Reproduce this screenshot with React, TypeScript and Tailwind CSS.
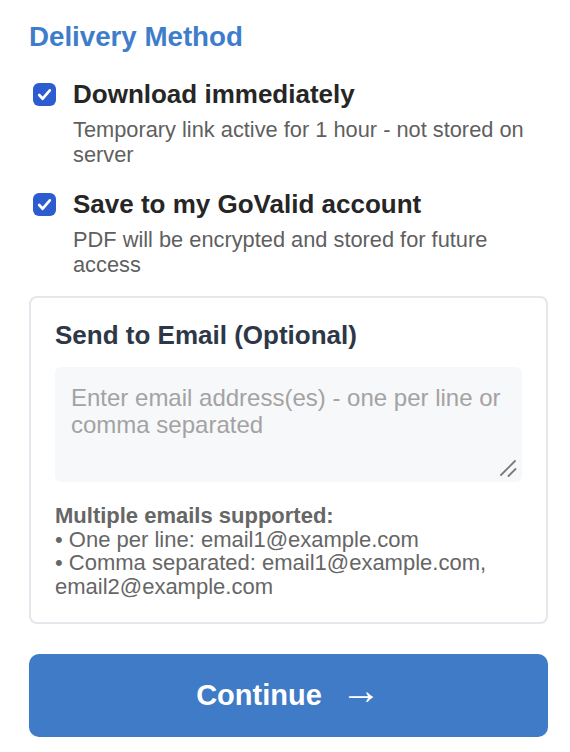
import { useState } from 'react';

interface OptionProps {
  title: string;
  description: string;
  checked: boolean;
  onToggle: () => void;
}

function CheckIcon(): JSX.Element {
  return (
    <svg viewBox="0 0 23 23" className="h-[23px] w-[23px]">
      <path
        d="M6.2 12l3.5 3.7L16.8 7.4"
        fill="none"
        stroke="#fff"
        strokeWidth="2.7"
        strokeLinecap="round"
        strokeLinejoin="round"
      />
    </svg>
  );
}

function Option({ title, description, checked, onToggle }: OptionProps): JSX.Element {
  return (
    <label className="flex cursor-pointer items-start gap-[17px]">
      <span
        onClick={onToggle}
        className={`ml-[4px] mt-[4px] flex h-[23px] w-[23px] shrink-0 items-center justify-center rounded-[6px] ${
          checked ? 'bg-[#2c5ccf]' : 'border-2 border-[#9ca3af] bg-white'
        }`}
      >
        {checked && <CheckIcon />}
      </span>
      <span className="flex flex-col">
        <span className="text-[26px] font-bold leading-[30px] text-[#262626]">{title}</span>
        <span className="mt-2 text-[21.8px] leading-[25px] text-[#5f5f5f]">{description}</span>
      </span>
    </label>
  );
}

export default function App(): JSX.Element {
  const [download, setDownload] = useState(true);
  const [save, setSave] = useState(true);
  const [emails, setEmails] = useState('');

  return (
    <div className="min-h-screen w-full bg-white pl-[29px] pr-[22px] pt-[21px] font-['Liberation_Sans',Arial,sans-serif]">
      <h2 className="text-[27.7px] font-bold leading-[32px] text-[#3e7dcb]">Delivery Method</h2>

      <div className="mt-[26px] flex flex-col gap-[22px]">
        <Option
          title="Download immediately"
          description="Temporary link active for 1 hour - not stored on server"
          checked={download}
          onToggle={() => setDownload(v => !v)}
        />
        <Option
          title="Save to my GoValid account"
          description="PDF will be encrypted and stored for future access"
          checked={save}
          onToggle={() => setSave(v => !v)}
        />
      </div>

      <div className="mt-[19px] rounded-[8px] border-2 border-[#e4e7eb] px-6 pb-[23px] pt-[22px]">
        <h3 className="text-[26px] font-bold leading-[30px] text-[#2d3748]">Send to Email (Optional)</h3>
        <div className="relative mt-[17px]">
          <textarea
            value={emails}
            onChange={e => setEmails(e.target.value)}
            placeholder="Enter email address(es) - one per line or comma separated"
            className="block h-[115px] w-full resize-none rounded-[6px] bg-[#f7f8fa] px-4 pt-[17px] text-[24px] leading-[27px] text-[#333] outline-none placeholder:text-[#a3a3a3]"
          />
          {/* resize grip */}
          <svg viewBox="0 0 24 24" className="pointer-events-none absolute bottom-0 right-0 h-[24px] w-[24px]">
            <path d="M3 17L17 3M10.5 18L17.5 11" stroke="#7a7a7a" strokeWidth="1.8" strokeLinecap="round" />
          </svg>
        </div>
        <p className="mt-[22px] text-[22px] leading-[23.7px] text-[#666]">
          <strong className="font-bold">Multiple emails supported:</strong>
          <br />• One per line: email1@example.com
          <br />• Comma separated: email1@example.com, email2@example.com
        </p>
      </div>

      <button
        type="button"
        className="mt-[30px] flex h-[83px] w-full items-center justify-center gap-[19px] rounded-[10px] bg-[#3f7bc6] font-bold text-white"
      >
        <span className="text-[29px] leading-[34px]">Continue</span>
        <span className="mb-[10px] text-[40px] font-normal leading-[34px]">→</span>
      </button>
    </div>
  );
}
